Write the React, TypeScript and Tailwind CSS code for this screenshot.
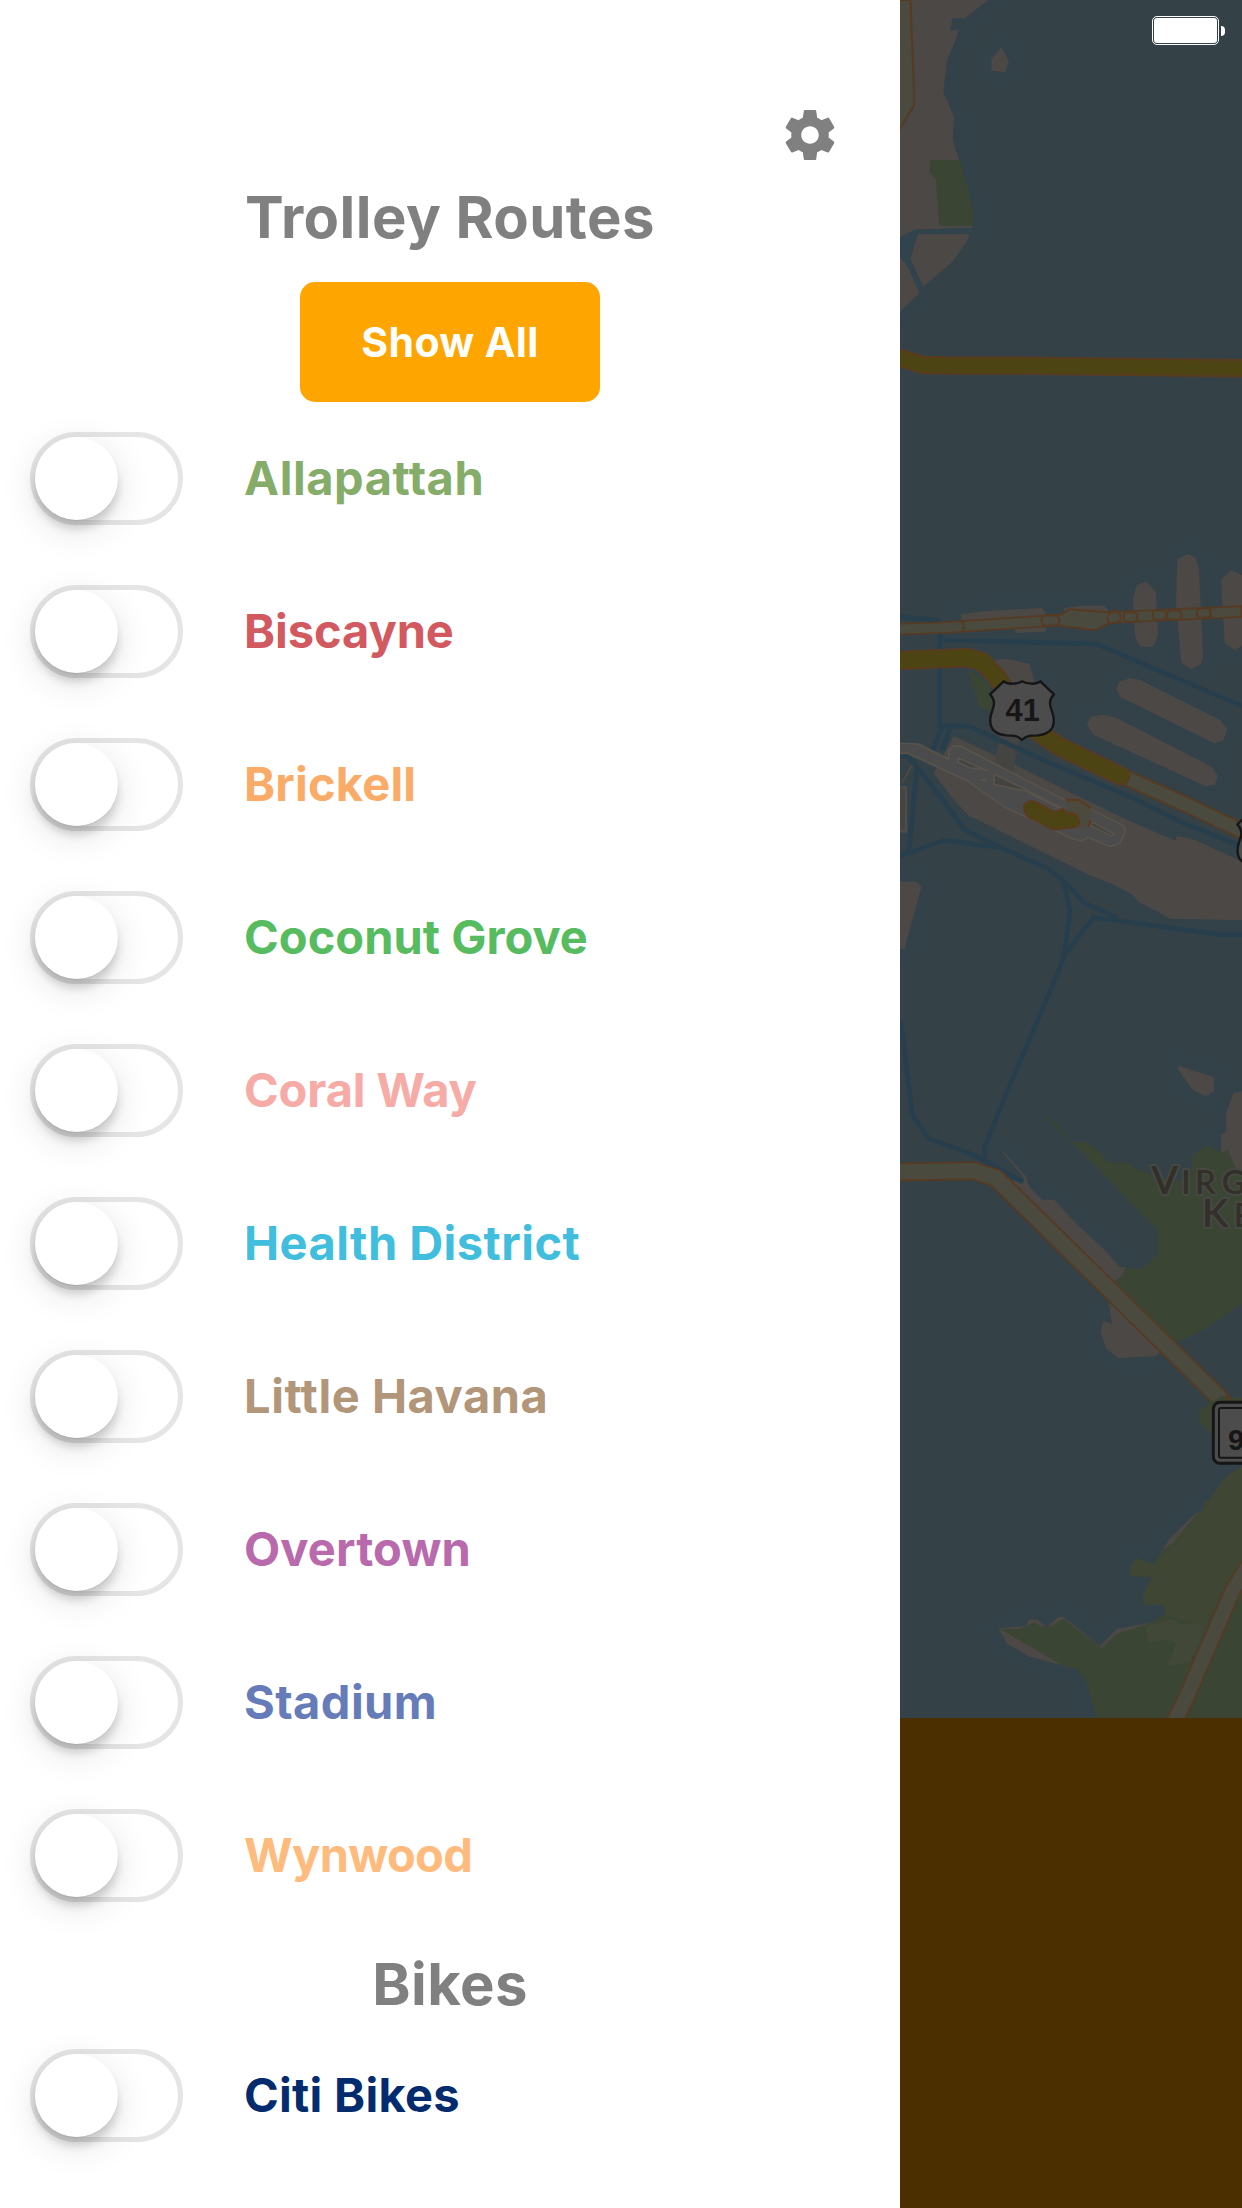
type Route = { name: string; className: string };

const routes: Route[] = [
  { name: "Allapattah", className: "text-[#85ac68] tracking-[0.55px]" },
  { name: "Biscayne", className: "text-[#d2595f] tracking-[-0.07px]" },
  { name: "Brickell", className: "text-[#f9ab67] tracking-[0.2px]" },
  { name: "Coconut Grove", className: "text-[#57bb5f] tracking-[0.03px]" },
  { name: "Coral Way", className: "text-[#f6aba7] tracking-[-0.15px]" },
  { name: "Health District", className: "text-[#41bedd] tracking-[0.46px]" },
  { name: "Little Havana", className: "text-[#b2967a] tracking-[0.55px]" },
  { name: "Overtown", className: "text-[#b86aad] tracking-[0.15px]" },
  { name: "Stadium", className: "text-[#667cb9] tracking-[0.45px]" },
  { name: "Wynwood", className: "text-[#ffbb7e] tracking-[-0.67px]" },
];

const bikes: Route[] = [{ name: "Citi Bikes", className: "text-[#032b6e] tracking-[0.3px]" }];

function ToggleRow({ route }: { route: Route }) {
  return (
    <label className="flex h-[153px] items-center pl-[30px]">
      <span
        role="switch"
        aria-checked="false"
        className="flex h-[93px] w-[153px] shrink-0 items-center rounded-full border-[5px] border-[#e5e5e5]"
      >
        <span className="size-[83px] rounded-full bg-white shadow-[0_9px_9px_rgba(0,0,0,0.15),0_9px_36px_rgba(0,0,0,0.12),0_1px_1px_rgba(0,0,0,0.06)]" />
      </span>
      <span className={`mb-[2px] ml-[61px] text-[47px] leading-none font-bold whitespace-nowrap ${route.className}`}>
        {route.name}
      </span>
    </label>
  );
}

function GearIcon() {
  return (
    <svg viewBox="0 0 24 24" className="size-[60px] fill-[#808080]">
      <path d="M19.43 12.98c.04-.32.07-.64.07-.98s-.03-.66-.07-.98l2.11-1.65c.19-.15.24-.42.12-.64l-2-3.46c-.12-.22-.39-.3-.61-.22l-2.49 1c-.52-.4-1.08-.73-1.69-.98l-.38-2.65C14.46 2.18 14.25 2 14 2h-4c-.25 0-.46.18-.49.42l-.38 2.65c-.61.25-1.17.59-1.69.98l-2.49-1c-.23-.09-.49 0-.61.22l-2 3.46c-.13.22-.07.49.12.64l2.11 1.65c-.04.32-.07.65-.07.98s.03.66.07.98l-2.11 1.65c-.19.15-.24.42-.12.64l2 3.46c.12.22.39.3.61.22l2.49-1c.52.4 1.08.73 1.69.98l.38 2.65c.03.24.24.42.49.42h4c.25 0 .46-.18.49-.42l.38-2.65c.61-.25 1.17-.59 1.69-.98l2.49 1c.23.09.49 0 .61-.22l2-3.46c.12-.22.07-.49-.12-.64l-2.11-1.65zM12 15.5c-1.93 0-3.5-1.57-3.5-3.5s1.57-3.5 3.5-3.5 3.5 1.57 3.5 3.5-1.57 3.5-3.5 3.5z" />
    </svg>
  );
}

const LAND = "#4b4845";
const PARK = "#3b4534";
const CHANNEL = "#273e4d";
const ROAD = "#4a4a3f";
const ROAD_EDGE = "#563a22";
const HIGHWAY = "#4c4413";
const HIGHWAY_EDGE = "#5b3b20";

function Shore({ shapes }: { shapes: string[] }) {
  return (
    <>
      {shapes.map((d) => (
        <path key={`s${d}`} d={d} fill="none" stroke="#334149" strokeWidth="90" strokeLinejoin="round" />
      ))}
      {shapes.map((d) => (
        <path key={d} d={d} fill={LAND} />
      ))}
    </>
  );
}

function NorthShore() {
  return (
    <g transform="translate(880 0) scale(.33333)">
      <Shore
        shapes={[
          "M0 0H324L256 54H217L211 91H234L228 118L201 180L190 275L222 352L218 420L238 480L278 640L276 684L106 689L68 707L60 735V770L82 797L119 878L60 935H0Z",
          "M364 141L387 184L376 217L334 212V176Z",
        ]}
      />
      <path d="M106 689L276 684L280 700H113L90 776L130 862L119 878L82 797L60 768V712Z" fill="#31434c" />
      <path d="M113 702H269L260 726L216 787L130 860L91 776Z" fill={LAND} />
      <path d="M149 480H239L266 575L281 645L277 677H178L167 537L149 518Z" fill={PARK} />
      <path d="M0 0H91L102 262V315L60 387H0Z" fill={ROAD} stroke={ROAD_EDGE} strokeWidth="6" />
      <path d="M40 1067L60 1074L130 1095L230 1097H420L1100 1105" fill="none" stroke={HIGHWAY_EDGE} strokeWidth="55" />
      <path d="M40 1067L60 1074L130 1095L230 1097H420L1100 1105" fill="none" stroke={HIGHWAY} strokeWidth="44" />
    </g>
  );
}

function PortIslands() {
  return (
    <g transform="translate(880 500) scale(.33333)">
      <Shore
        shapes={[
          "M243 342L315 333L483 324L497 336V395L408 399L400 380L246 388Z",
          "M552 323L605 318L672 317L686 334L680 370L556 385Z",
          "M770 255L801 245L828 277L834 404L820 440H780L765 410L759 295Z",
          "M892 178L925 162L946 173L957 205L969 470L963 493L933 508L904 488L888 310Z",
          "M1023 238L1054 210L1090 228V435L1063 451L1034 430Z",
          "M709 568L717 545L751 534L781 540L1020 660L1042 688L1030 721L1005 731L739 600L723 594Z",
          "M621 675L632 650L673 644L710 654L995 800L1014 827L1004 855L975 858L640 704Z",
          "M221 708L409 796L604 893L742 960L887 1022L890 1007L945 1020L1090 1086V1261L872 1256L777 1207L755 1183L695 1151L629 1126L263 945L217 894L161 820Z",
          "M40 1145H111L124 1162L73 1347H40Z",
          "M343 480L378 476L449 491L465 550L395 570Z",
        ]}
      />
      <path d="M347 765L364 700H425L410 750L400 815L350 790Z" fill="#444443" />
      <path d="M265 507L335 560L335 637L298 620L283 572Z" fill={PARK} />
      <g fill="none" stroke={CHANNEL} strokeWidth="14" strokeLinejoin="round">
        <path d="M40 349L175 361L180 410L195 420L650 432L1100 624" />
        <path d="M179 410V678H265L500 784L770 899L900 965L1100 1045" />
        <path d="M184 685L157 751M212 680L186 750M60 770L80 767L105 793L160 863L255 990L350 1037L505 1107L550 1142L615 1210L713 1253" />
        <path d="M55 1068L77 1062L193 1021L358 1042M78 1062L88 1040L111 800" />
        <path d="M550 1142L570 1230L553 1370L495 1510L370 1802L314 1940V1980M548 1372L640 1253L830 1278L1020 1304H1100" />
      </g>

      <g strokeLinejoin="round">
        <path d="M40 729L115 732L205 777L207 753L221 737L240 738L550 898L620 922L730 977L737 995L720 1029L690 1040L625 1012L606 1023L575 1015L372 920L324 887L304 873L262 842L83 760H40Z" fill="#4b4b4b" stroke="#58534c" strokeWidth="5" />
        <path d="M234 773L320 812L302 807L270 804L234 786ZM342 822L440 870L545 924L533 922L435 873L343 854ZM303 840L316 834V843ZM637 966L701 1002L695 1009L630 976Z" fill="#454340" stroke="#58534c" strokeWidth="5" />
        <path d="M560 901L600 900L630 922V975L605 990L570 955Z" fill="#4c4a3c" />
        <path d="M556 900H600L632 925M632 963L625 980" fill="none" stroke={HIGHWAY_EDGE} strokeWidth="7" />
        <path d="M432 930C428 908 450 898 470 907L525 937L547 927L567 940C590 938 602 956 596 974C590 984 578 981 562 984L520 989L443 950Z" fill={HIGHWAY} stroke={HIGHWAY_EDGE} strokeWidth="6" />
      </g>
      <path d="M60 862H78V994H60" fill="#464442" stroke="#504d49" strokeWidth="7" />
      <path d="M66 850L97 795" stroke="#4c483b" strokeWidth="6" />

      <path d="M40 388L190 383L540 360L680 353L1100 334" fill="none" stroke={ROAD_EDGE} strokeWidth="37" />
      <path d="M540 347L567 328L685 337L708 333V367L688 370L643 391L540 377Z" fill={ROAD} stroke={ROAD_EDGE} strokeWidth="6" />
      <path d="M40 388L190 383L540 360L560 358M670 354L710 352L1100 334" fill="none" stroke={ROAD} strokeWidth="27" />
      <g fill="none" stroke={ROAD_EDGE} strokeWidth="6">
        <path d="M245 366Q257 379 247 393M992 324Q987 338 996 353M1085 320V348" />
        <rect x="485" y="346" width="53" height="31" rx="14" />
        <rect x="682" y="337" width="40" height="32" rx="15" transform="rotate(-20 702 353)" />
        <rect x="731" y="337" width="41" height="28" rx="12" />
        <rect x="818" y="331" width="40" height="28" rx="12" />
        <rect x="861" y="331" width="44" height="28" rx="12" />
        <rect x="951" y="325" width="40" height="28" rx="12" />
      </g>

      <path d="M722 826L910 910L1100 1000" fill="none" stroke={ROAD_EDGE} strokeWidth="50" />
      <path d="M722 826L910 910L1100 1000" fill="none" stroke={ROAD} strokeWidth="39" />
      <g fill="none" strokeLinecap="round" strokeLinejoin="round">
        <path d="M20 483L262 473L306 485L350 530L400 610L460 686L535 738L722 828" stroke={HIGHWAY_EDGE} strokeWidth="58" />
        <path d="M20 483L262 473L306 485L350 530L400 610L460 686L535 738L722 828" stroke={HIGHWAY} strokeWidth="47" />
      </g>

      <path
        id="us-shield"
        d="M371 544C383 554 411 553 426 544C441 553 469 554 481 544L522 583C496 610 520 632 521 655C524 690 503 704 473 706C449 706 438 708 426 720C414 708 403 706 379 706C349 704 328 690 331 655C332 632 356 610 330 583Z"
        fill="#4c4c4c"
        stroke="#161616"
        strokeWidth="7"
        strokeLinejoin="round"
      />
      <text x="428" y="662" textAnchor="middle" className="fill-[#161616] font-['Liberation_Sans'] text-[92px] font-bold">
        41
      </text>
      <use href="#us-shield" x="742" y="390" />
    </g>
  );
}

function VirginiaKey() {
  return (
    <g transform="translate(880 1000) scale(.33333)">
      <Shore
        shapes={[
          "M896 197L1002 231V273L977 289L939 271L894 208Z",
          "M1100 270L1060 279L1038 342V397L1023 402V470L1062 510L1100 520Z",
          "M686 905L696 973L671 962L661 997L680 1048L715 1075L826 1069L850 1050L760 900Z",
          "M366 455L374 458L438 529L449 562L486 599H523L590 672L675 751L720 802H738L728 824L703 850L690 860L380 540L433 545L430 530Z",
        ]}
      />
      <path d="M478 334L530 372L574 425L620 428L655 452L684 487H742L770 507L832 530L895 544L930 520L939 464L984 436L1025 458L1043 450L1068 505L1100 515V900L980 985L912 1020L870 1026L700 850L728 824L738 804L788 807L834 760V690L600 452Z" fill={PARK} />
      <path d="M40 40L64 75L97 345L146 415L288 468L428 546" fill="none" stroke={CHANNEL} strokeWidth="14" />
      <g fill="none">
        <path d="M40 516L280 512L348 534L1010 1185L1040 1220" stroke={ROAD_EDGE} strokeWidth="57" />
        <path d="M40 516L280 512L348 534L1010 1185L1040 1220" stroke={ROAD} strokeWidth="46" />
      </g>
      <g
        className="fill-[#332f29] stroke-[#464843] font-[Lato] font-semibold"
        strokeWidth="12"
        strokeLinejoin="round"
        paintOrder="stroke"
      >
        <text x="814 904 945 1025" y="582">
          <tspan className="text-[117px]">V</tspan>
          <tspan className="text-[98px]">IRG</tspan>
        </text>
        <text x="966 1061" y="681">
          <tspan className="text-[117px]">K</tspan>
          <tspan className="text-[98px]">E</tspan>
        </text>
      </g>
    </g>
  );
}

function KeyBiscayne() {
  return (
    <g transform="translate(880 1350) scale(.33333)">
      <path d="M1023 138L1090 145V260H1000L957 213V183L990 160Z" fill="#3c4533" />
      <path d="M1038 135L1100 190" stroke={ROAD_EDGE} strokeWidth="8" />
      <Shore
        shapes={[
          "M1100 340L1043 375L1024 410L1003 424L999 449L973 456L970 480L940 496L870 565L822 643L770 625L752 650V677L816 682L790 735V763L850 765L857 790L820 816L710 837L660 888L551 801H535L500 832L470 808H447L438 827L355 835L381 881L449 920L590 957L620 990L652 1110H1100Z",
        ]}
      />
      <path d="M1100 340L1043 375L1031 408L1003 426L999 451L973 456L970 480L944 500L880 577L850 600L822 643L770 625L752 650V677L818 682L790 735V763L850 765L857 790L820 816L708 853L665 895L551 806L515 828L485 830L465 817L415 838L360 837L545 944L590 957L615 985L652 1110H1100Z" fill={PARK} />
      <path d="M1100 340L1043 375L1003 426L970 480L880 577L822 643L770 625L752 650V677L818 682L790 735V763L850 765L860 795L975 828L1040 705L1100 610Z" fill="#3f4634" />
      <path d="M798 827L875 808L902 824L942 819L978 829L930 936L861 949L888 880L866 867L803 878Z" fill="#414838" />
      <g fill="none">
        <path d="M870 1140L920 1040L1060 718L1110 640" stroke={ROAD_EDGE} strokeWidth="52" />
        <path d="M870 1140L920 1040L1060 718L1110 640" stroke={ROAD} strokeWidth="42" />
      </g>
      <rect x="1000" y="157" width="180" height="183" rx="20" fill="#4c4c4c" stroke="#161616" strokeWidth="9" />
      <rect x="1017" y="174" width="146" height="149" rx="6" fill="#4c4c4c" stroke="#161616" strokeWidth="6" />
      <text x="1044" y="299" className="fill-[#161616] font-['Liberation_Sans'] text-[88px] font-bold">
        9
      </text>
    </g>
  );
}

function BatteryIcon() {
  return (
    <div className="absolute top-[16px] right-[17px] flex items-center gap-[2px]">
      <div className="h-[29px] w-[67px] rounded-[5px] border border-white p-px">
        <div className="h-full rounded-[3px] bg-white" />
      </div>
      <div className="h-[10px] w-[4px] rounded-r-full bg-white" />
    </div>
  );
}

export default function App() {
  return (
    <div className="flex h-[2208px] w-[1242px] overflow-hidden bg-white font-[Inter,sans-serif]">
      <aside className="flex w-[900px] shrink-0 flex-col bg-white">
        <div className="flex justify-end pt-[105px] pr-[60px]">
          <button aria-label="Settings" className="size-[60px]">
            <GearIcon />
          </button>
        </div>
        <h2 className="mt-[16px] h-[72px] text-center text-[58px] leading-[72px] font-bold tracking-[0.45px] text-[#808080]">
          Trolley Routes
        </h2>
        <button className="mt-[29px] h-[120px] w-[300px] self-center rounded-[15px] bg-[#ffa500] pt-[2px] text-[41px] font-bold tracking-[0.4px] text-white">
          Show All
        </button>
        <div>
          {routes.map((route) => (
            <ToggleRow key={route.name} route={route} />
          ))}
        </div>
        <h2 className="mt-[16px] h-[71px] text-center text-[58px] leading-[72px] font-bold tracking-[0.45px] text-[#808080]">
          Bikes
        </h2>
        {bikes.map((route) => (
          <ToggleRow key={route.name} route={route} />
        ))}
      </aside>
      <main className="relative flex flex-1 flex-col bg-[#4b2f00]">
        <svg viewBox="900 0 342 1718" className="h-[1718px] w-[342px] bg-[#344248]">
          <NorthShore />
          <PortIslands />
          <VirginiaKey />
          <KeyBiscayne />
        </svg>
        <BatteryIcon />
      </main>
    </div>
  );
}
